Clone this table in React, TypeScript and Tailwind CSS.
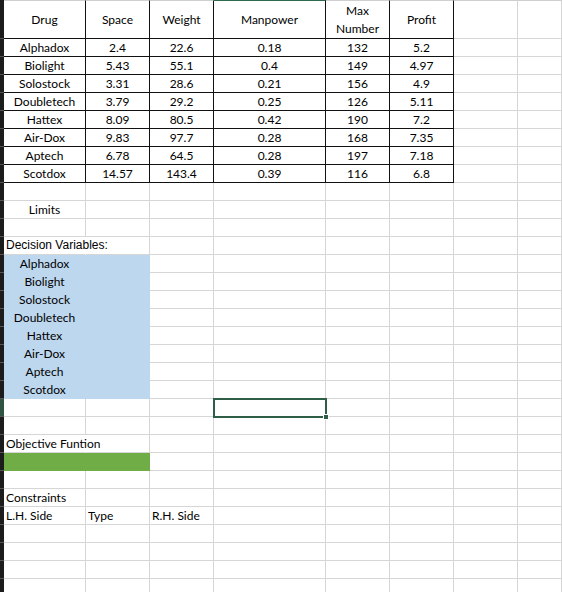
import React from 'react';

type Kind = 'plain' | 'table' | 'blue' | 'green';

interface CellSpec {
  text?: React.ReactNode;
  align?: 'center' | 'left';
  kind?: Kind;
  overflow?: boolean; // text runs into the next cell, so hide right gridline
  arial?: boolean;
  selected?: boolean;
}

const drugs = ['Alphadox', 'Biolight', 'Solostock', 'Doubletech', 'Hattex', 'Air-Dox', 'Aptech', 'Scotdox'];

const data: (string | number)[][] = [
  ['Alphadox', 2.4, 22.6, 0.18, 132, 5.2],
  ['Biolight', 5.43, 55.1, 0.4, 149, 4.97],
  ['Solostock', 3.31, 28.6, 0.21, 156, 4.9],
  ['Doubletech', 3.79, 29.2, 0.25, 126, 5.11],
  ['Hattex', 8.09, 80.5, 0.42, 190, 7.2],
  ['Air-Dox', 9.83, 97.7, 0.28, 168, 7.35],
  ['Aptech', 6.78, 64.5, 0.28, 197, 7.18],
  ['Scotdox', 14.57, 143.4, 0.39, 116, 6.8],
];

const COLS = 8; // A..H

const Cell: React.FC<{ spec?: CellSpec; header?: boolean; topLine?: boolean; col: number }> = ({ spec = {}, header, topLine, col }) => {
  const kind = spec.kind ?? 'plain';
  let border = 'border-[#d6d6d6]';
  if (kind === 'table') border = 'border-[#111]';
  if (kind === 'blue') border = 'border-[#bdd7ee]';
  if (kind === 'green') border = 'border-[#70ad47]';
  const bg = kind === 'blue' ? 'bg-[#bdd7ee]' : kind === 'green' ? 'bg-[#70ad47]' : '';
  const right = spec.overflow ? 'border-r-transparent' : '';
  const top = topLine ? (col === 3 ? 'border-t border-t-[#2f6a4c]' : 'border-t border-t-[#cfcfcf]') : '';
  const h = header ? 'h-[39px] items-center' : 'h-[18px] items-end pb-px';
  const justify = spec.align === 'left' ? 'justify-start pl-[2px]' : 'justify-center';
  const font = spec.arial ? "font-['Liberation_Sans',Arial,sans-serif]" : "font-['Lato',sans-serif]";
  return (
    <div className={`relative flex ${h} ${justify} border-r border-b ${border} ${right} ${top} ${bg} ${font} text-[12px] leading-[15px] text-black whitespace-nowrap`}>
      {spec.text !== undefined && <span className={spec.overflow ? 'relative z-10' : ''}>{spec.text}</span>}
      {spec.selected && (
        <div className="absolute -left-px -top-px w-[114px] h-[20px] border-2 border-[#2e5e46] z-20">
          <div className="absolute -right-[4px] -bottom-[4px] w-[6px] h-[6px] bg-[#2e5e46] border border-white" />
        </div>
      )}
    </div>
  );
};

export default function App() {
  const rows: { cells: CellSpec[]; header?: boolean; selected?: boolean }[] = [];

  // header row
  rows.push({
    header: true,
    cells: [
      { text: 'Drug', kind: 'table' },
      { text: 'Space', kind: 'table' },
      { text: 'Weight', kind: 'table' },
      { text: 'Manpower', kind: 'table' },
      { text: <span className="block text-center leading-[18px]">Max<br />Number</span>, kind: 'table' },
      { text: 'Profit', kind: 'table' },
    ],
  });
  data.forEach((r) => rows.push({ cells: r.map((v) => ({ text: String(v), kind: 'table' as Kind })) }));
  rows.push({ cells: [] });
  rows.push({ cells: [{ text: 'Limits' }] });
  rows.push({ cells: [] });
  rows.push({ cells: [{ text: 'Decision Variables:', align: 'left', overflow: true, arial: true }] });
  drugs.forEach((d) => rows.push({ cells: [{ text: d, kind: 'blue', overflow: true }, { kind: 'blue' }] }));
  rows.push({ selected: true, cells: [{}, {}, {}, { selected: true }] });
  rows.push({ cells: [] });
  rows.push({ cells: [{ text: 'Objective Funtion', align: 'left', overflow: true }] });
  rows.push({ cells: [{ kind: 'green', overflow: true }, { kind: 'green' }] });
  rows.push({ cells: [] });
  rows.push({ cells: [{ text: 'Constraints', align: 'left' }] });
  rows.push({ cells: [{ text: 'L.H. Side', align: 'left' }, { text: 'Type', align: 'left' }, { text: 'R.H. Side', align: 'left' }] });
  for (let i = 0; i < 4; i++) rows.push({ cells: [] });

  return (
    <div className="w-[562px] h-[592px] overflow-hidden bg-white">
      <div className="grid grid-cols-[4px_82px_64px_64px_112px_64px_64px_64px_1fr]">
        {rows.map((row, ri) => (
          <React.Fragment key={ri}>
            <div
              className={`${row.header ? 'h-[39px]' : 'h-[18px]'} border-b border-b-[#555] ${row.selected ? 'bg-[#2f5443]' : 'bg-[#1c1c1c]'}`}
            />
            {Array.from({ length: COLS }).map((_, ci) => (
              <Cell key={ci} col={ci} spec={row.cells[ci]} header={row.header} topLine={ri === 0} />
            ))}
          </React.Fragment>
        ))}
      </div>
    </div>
  );
}
